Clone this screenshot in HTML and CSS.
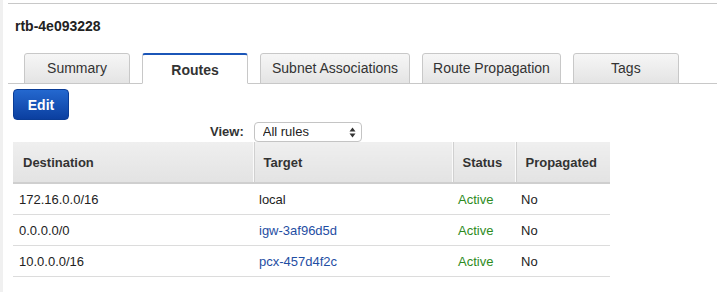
FILE: index.html
```html
<!DOCTYPE html>
<html lang="en">
<head>
    <meta charset="UTF-8">
    <title>Route Table - rtb-4e093228</title>
    <link rel="stylesheet" href="styles.css">
</head>
<body>

<div class="page">
    <div class="detail-head">
        <h2>rtb-4e093228</h2>
    </div>

    <div class="tabs">
        <a href="#" class="tab">Summary</a>
        <a href="#" class="tab active">Routes</a>
        <a href="#" class="tab wide">Subnet Associations</a>
        <a href="#" class="tab">Route Propagation</a>
        <a href="#" class="tab">Tags</a>
    </div>

    <div class="tab-body">
        <button class="btn-edit">Edit</button>

        <div class="view-row">
            <label for="view">View:</label>
            <span class="select-wrap">
                <select id="view">
                    <option>All rules</option>
                    <option>Active rules</option>
                </select>
                <svg class="select-arrows" width="7" height="11" viewBox="0 0 7 11">
                    <path d="M3.5 0.5 L6.5 4.5 L0.5 4.5 Z" fill="#333"/>
                    <path d="M3.5 10.5 L6.5 6.5 L0.5 6.5 Z" fill="#333"/>
                </svg>
            </span>
        </div>

        <table class="routes">
            <tr>
                <th class="col-dest">Destination</th>
                <th class="col-target">Target</th>
                <th class="col-status">Status</th>
                <th class="col-prop">Propagated</th>
            </tr>
            <tr>
                <td>172.16.0.0/16</td>
                <td>local</td>
                <td class="active">Active</td>
                <td>No</td>
            </tr>
            <tr>
                <td>0.0.0.0/0</td>
                <td><a href="#">igw-3af96d5d</a></td>
                <td class="active">Active</td>
                <td>No</td>
            </tr>
            <tr>
                <td>10.0.0.0/16</td>
                <td><a href="#">pcx-457d4f2c</a></td>
                <td class="active">Active</td>
                <td>No</td>
            </tr>
        </table>
    </div>
</div>

</body>
</html>
```

FILE: styles.css
```css
body {
    margin: 0;
    font-family: "Liberation Sans", Arial, sans-serif;
    color: #333;
    background-color: #fff;
}

.page {
    border-left: 3px solid #f0f0f0;
    height: 292px;
    box-sizing: border-box;
    padding-top: 3px;
}

.detail-head {
    margin-left: 5px;
    border-top: 1px solid #c8c8c8;
    padding: 14px 7px 0;
    height: 35px;
}

.detail-head h2 {
    margin: 0;
    font-size: 14px;
    line-height: 16px;
    font-weight: bold;
    color: #222;
}

/* tabs */
.tabs {
    display: flex;
    gap: 12px;
    margin-left: 5px;
    padding-left: 16px;
    border-bottom: 1px solid #c8c8c8;
    height: 30px;
    align-items: flex-end;
}

.tab {
    box-sizing: border-box;
    min-width: 106px;
    height: 31px;
    margin-bottom: -1px;
    padding: 0 10px;
    border: 1px solid #c8c8c8;
    border-radius: 3px 3px 0 0;
    background: linear-gradient(#f6f6f6, #e4e4e4);
    color: #333;
    font-size: 14px;
    line-height: 29px;
    text-align: center;
    text-decoration: none;
}

.tab.wide {
    padding: 0 11px;
}

.tab.active {
    background: #fff;
    border-top: 2px solid #1b56b8;
    border-bottom: 1px solid #fff;
    font-weight: bold;
    line-height: 30px;
    padding: 0 12px;
}

/* routes tab content */
.tab-body {
    padding: 5px 0 0 10px;
}

.btn-edit {
    display: block;
    width: 56px;
    height: 31px;
    border: 1px solid #0a3c96;
    border-radius: 4px;
    background: linear-gradient(#2468cf, #0b3fa0);
    color: #fff;
    font-family: "Liberation Sans", Arial, sans-serif;
    font-size: 14px;
    font-weight: bold;
    cursor: pointer;
}

.view-row {
    display: flex;
    align-items: center;
    gap: 10px;
    margin-top: 1px;
    padding-left: 197px;
    height: 21px;
}

.view-row label {
    font-size: 13px;
    font-weight: bold;
    color: #333;
}

.select-wrap {
    position: relative;
    display: inline-block;
}

.select-wrap select {
    appearance: none;
    -webkit-appearance: none;
    width: 108px;
    height: 20px;
    padding: 0 0 0 8px;
    border: 1px solid #c4c4c4;
    border-radius: 4px;
    background: #fff;
    font-family: "Liberation Sans", Arial, sans-serif;
    font-size: 13px;
    color: #222;
}

.select-arrows {
    position: absolute;
    right: 6px;
    top: 5px;
}

/* table */
.routes {
    border-collapse: collapse;
    margin-top: 0;
    width: 597px;
    font-size: 13px;
}

.routes th {
    height: 41px;
    box-sizing: border-box;
    padding: 0 10px;
    text-align: left;
    font-weight: bold;
    color: #333;
    background: linear-gradient(#efefef, #e3e3e3);
    border-bottom: 2px solid #cfcfcf;
    border-left: 1px solid #fafafa;
    box-shadow: inset 1px 0 0 #d0d0d0;
}

.routes th:first-child {
    border-left: none;
    box-shadow: none;
}

.routes td {
    height: 30px;
    padding: 0 6px;
    border-bottom: 1px solid #dcdcdc;
    color: #222;
}

.col-dest { width: 240px; }
.col-target { width: 199px; }
.col-status { width: 63px; }
.col-prop { width: 95px; }

.routes a {
    color: #1f4ea3;
    text-decoration: none;
}

.routes td.active {
    color: #2e8b1e;
}
```
